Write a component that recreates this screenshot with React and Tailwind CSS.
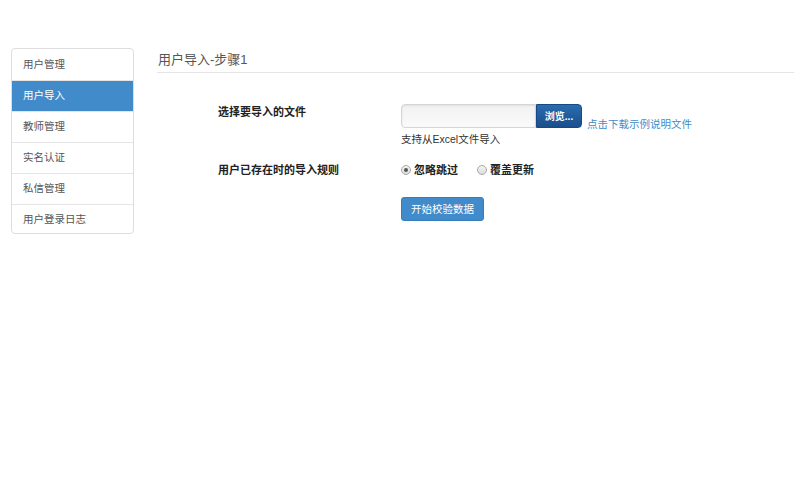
import React, { useState } from 'react';

const menu = ['用户管理', '用户导入', '教师管理', '实名认证', '私信管理', '用户登录日志'];

function Radio({ checked, label, onClick }) {
	return (
		<label className="flex items-center cursor-pointer" onClick={onClick}>
			<span className="w-[10px] h-[10px] rounded-full border border-[#a9a9a9] bg-gradient-to-b from-[#f4f4f4] to-[#dcdcdc] flex items-center justify-center">
				{checked && <span className="w-[4px] h-[4px] rounded-full bg-[#555]" />}
			</span>
			<span className="ml-[3px] font-bold text-[11px] text-[#222]">{label}</span>
		</label>
	);
}

export default function App() {
	const [active, setActive] = useState(1);
	const [rule, setRule] = useState('skip');

	return (
		<div className="w-[800px] h-[480px] bg-white text-[#333] pt-[48px] pl-[11px] flex" style={{ fontFamily: '"Liberation Sans", "Noto Sans CJK SC", sans-serif' }}>
			<ul className="w-[123px] h-[186px] border border-[#ddd] rounded-[4px] overflow-hidden shrink-0">
				{menu.map((m, i) => (
					<li
						key={m}
						onClick={() => setActive(i)}
						className={`h-[31px] flex items-center pl-[11px] text-[10.5px] cursor-pointer ${i > 0 ? 'border-t border-[#e5e5e5]' : ''} ${i === active ? 'bg-[#428bca] text-white border-[#428bca]' : 'text-[#555]'}`}
					>
						{m}
					</li>
				))}
			</ul>

			<div className="ml-[23px] w-[637px]">
				<div className="h-[25px] border-b border-[#e5e5e5] pl-[1px] pt-[2px] text-[13px] leading-[20px] text-[#555]">
					用户导入-步骤1
				</div>

				<div className="mt-[31px] flex">
					<div className="w-[244px] pl-[61px] font-bold text-[11px] leading-[16px] text-[#222]">选择要导入的文件</div>
					<div>
						<div className="flex items-end">
							<div className="w-[135px] h-[24px] border border-[#d5d5d5] rounded-l-[4px] bg-gradient-to-b from-[#f2f2f2] to-[#fafafa] shadow-[inset_0_1px_2px_rgba(0,0,0,0.08)]" />
							<button className="w-[46px] h-[24px] rounded-r-[4px] bg-gradient-to-b from-[#2a6cb0] to-[#1a4f8c] border border-[#174a84] text-white font-bold text-[10px]">
								浏览...
							</button>
							<a href="#" className="ml-[5px] mb-[-4px] text-[10.5px] leading-[16px] text-[#428bca]">点击下载示例说明文件</a>
						</div>
						<div className="mt-[3px] text-[10.5px] leading-[16px] text-[#333]">支持从Excel文件导入</div>
					</div>
				</div>

				<div className="mt-[15px] flex items-center">
					<div className="w-[244px] pl-[61px] font-bold text-[11px] leading-[16px] text-[#222]">用户已存在时的导入规则</div>
					<div className="flex items-center gap-[19px]">
						<Radio checked={rule === 'skip'} label="忽略跳过" onClick={() => setRule('skip')} />
						<Radio checked={rule === 'cover'} label="覆盖更新" onClick={() => setRule('cover')} />
					</div>
				</div>

				<div className="mt-[17px] pl-[244px]">
					<button className="w-[83px] h-[24px] rounded-[3px] bg-[#428bca] border border-[#357ebd] text-white text-[10.5px]">
						开始校验数据
					</button>
				</div>
			</div>
		</div>
	);
}
